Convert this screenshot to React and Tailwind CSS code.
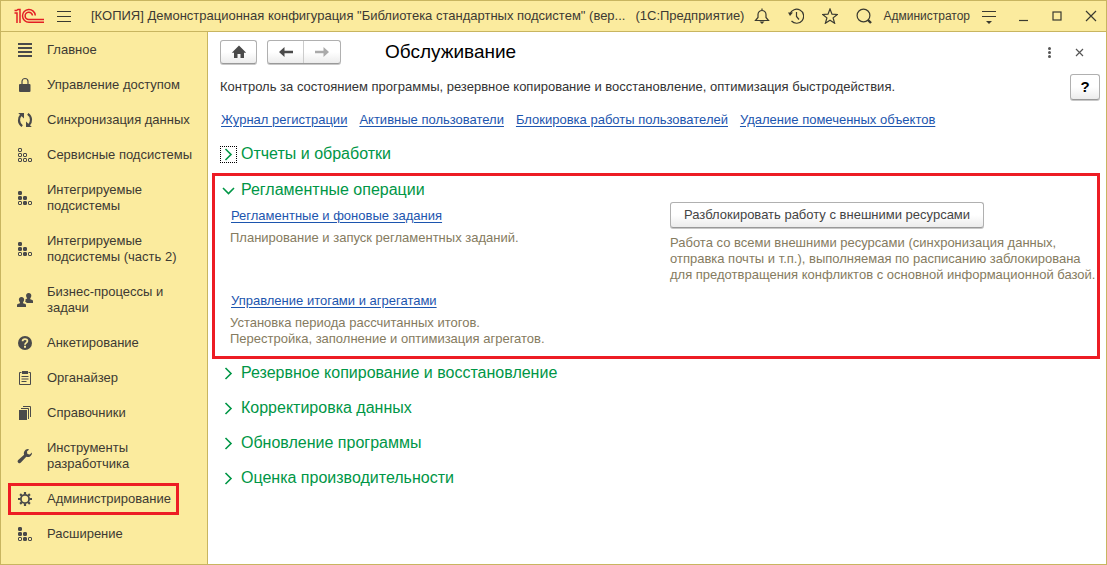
import React, { useState } from 'react'

const icons = {
    main: (
        <path d="M1 2h14M1 6h14M1 10h14M1 14h14" stroke="currentColor" strokeWidth={2} />
    ),
    lock: (
        <>
            <path d="M5 7V4.500a3 3 0 0 1 6 0V7" fill="none" stroke="currentColor" strokeWidth={1.2} />
            <rect x="2" y="7" width="11.500" height="8" rx="1" fill="currentColor" />
        </>
    ),
    sync: (
        <>
            <path d="M5.200 14.200C1.200 11.500 1 6 4.200 2.800M10.800 1.800C14.800 4.500 15 10 11.800 13.200" fill="none" stroke="currentColor" strokeWidth={2.200} />
            <path d="M1.200 1h5.800v5.500zM14.800 15H9V9.500z" fill="currentColor" />
        </>
    ),
    service: (
        <g fill="none" stroke="currentColor">
            <rect x="1.500" y="1.500" width="3" height="3" rx="0.500" />
            <rect x="1.500" y="6.500" width="3" height="3" rx="0.500" />
            <rect x="6.500" y="6.500" width="3" height="3" rx="0.500" />
            <rect x="1.500" y="11.500" width="3" height="3" rx="0.500" />
            <rect x="6.500" y="11.500" width="3" height="3" rx="0.500" />
            <rect x="11.500" y="11.500" width="3" height="3" rx="0.500" />
        </g>
    ),
    blocks: (
        <g fill="currentColor" stroke="currentColor">
            <rect x="1.500" y="1.500" width="3" height="3" rx="0.500" />
            <rect x="1.500" y="6.500" width="3" height="3" rx="0.500" />
            <rect x="6.500" y="6.500" width="3" height="3" rx="0.500" />
            <rect x="1.500" y="11.500" width="3" height="3" rx="0.500" fill="none" />
            <rect x="6.500" y="11.500" width="3" height="3" rx="0.500" />
            <rect x="11.500" y="11.500" width="3" height="3" rx="0.500" fill="none" />
        </g>
    ),
    people: (
        <g fill="currentColor">
            <path d="M11.700 1a2.600 2.600 0 0 1 2.500 3.400c-.2.800-.5 1.400-.9 1.700v1.100l2 .8c.5.200.7.600.7 1.100V11H9.800c-.2-.5-.6-.8-1-1l-.7-.3c.4-.7.600-1.500.4-2.500l1.600-.6v-.5c-.4-.3-.7-.9-.9-1.700A2.600 2.600 0 0 1 11.700 1z" />
            <path d="M4.500 5a2.600 2.600 0 0 1 2.500 3.400c-.2.800-.5 1.400-.9 1.700v1.100l2.200.8c.5.200.7.600.7 1.100V15H0v-1.900c0-.5.300-.9.700-1.100l2.200-.8v-1.100c-.4-.3-.7-.9-.9-1.700A2.600 2.600 0 0 1 4.500 5z" />
        </g>
    ),
    question: (
        <>
            <circle cx="8" cy="8" r="7" fill="currentColor" />
            <path d="M5.600 6.300C5.600 3.300 10.400 3.400 10.400 6.100 10.400 7.900 8 7.900 8 9.700" fill="none" stroke="#fbeb9e" strokeWidth={1.8} />
            <path d="M7 10.800h2v1.900H7z" fill="#fbeb9e" />
        </>
    ),
    organizer: (
        <g fill="none" stroke="currentColor">
            <path d="M4.500 2.500h-2v12h11v-12h-2" />
            <path d="M5 2.500h6" strokeWidth={3} />
            <path d="M4.500 6.500h7M4.500 9h7M4.500 11.500h5" />
        </g>
    ),
    books: (
        <>
            <rect x="2" y="5" width="8" height="10" fill="currentColor" />
            <path d="M4 3.500h7.500V14M6 1.500h7.500V12" fill="none" stroke="currentColor" />
        </>
    ),
    wrench: (
        <path
            d="M10.300 1.100a4.200 4.200 0 0 0-3.200 5.600L1.200 12a1.800 1.800 0 1 0 2.700 2.600l5.400-5.800a4.200 4.200 0 0 0 5.700-4.300l-2.300 2.100-2.300-.7-.5-2.300 2.300-2a4.600 4.600 0 0 0-1.900-.5z"
            fill="currentColor"
        />
    ),
    gear: (
        <g fill="none" stroke="currentColor">
            <circle cx="8" cy="8" r="4.100" strokeWidth={1.800} />
            <path d="M8 1v2.500M8 12.500V15M1 8h2.500M12.500 8H15M3.100 3.100l1.700 1.700M11.200 11.200l1.700 1.700M3.100 12.900l1.700-1.700M11.200 4.800l1.700-1.700" strokeWidth={2.2} />
        </g>
    ),
}

const menu = [
    { icon: 'main', label: 'Главное' },
    { icon: 'lock', label: 'Управление доступом' },
    { icon: 'sync', label: 'Синхронизация данных' },
    { icon: 'service', label: 'Сервисные подсистемы' },
    { icon: 'blocks', label: 'Интегрируемые подсистемы' },
    { icon: 'blocks', label: 'Интегрируемые подсистемы (часть 2)' },
    { icon: 'people', label: 'Бизнес-процессы и задачи' },
    { icon: 'question', label: 'Анкетирование' },
    { icon: 'organizer', label: 'Органайзер' },
    { icon: 'books', label: 'Справочники' },
    { icon: 'wrench', label: 'Инструменты разработчика' },
    { icon: 'gear', label: 'Администрирование', marked: true },
    { icon: 'blocks', label: 'Расширение' },
]

const links = ['Журнал регистрации', 'Активные пользователи', 'Блокировка работы пользователей', 'Удаление помеченных объектов']

const buttonStyle = 'border border-[#b0b0b0] border-b-[#999999] rounded-[3px] bg-linear-to-b from-white from-50% to-[#ececec] shadow-[0_1px_0_#c8c8c8]'

function Logo() {
    return (
        <svg className="w-[30px] h-4 shrink-0" viewBox="0 0 30 16" fill="none" stroke="#e31e24" strokeWidth={1.5} aria-label="1C" role="img">
            <path d="M0.500 5H3V15M0.500 2.500h2L4 1.500H6V15" />
            <path d="M21.300 7.500A6.400 6.400 0 1 0 15 14.300H30" />
            <path d="M18.500 7.500A3.700 3.700 0 1 0 15 11.600H30" />
        </svg>
    )
}

function HeaderButton({ label, children }) {
    return (
        <button type="button" aria-label={label} className="shrink-0 text-[#3a3a30]">
            <svg className="w-4 h-4" viewBox="0 0 16 16" fill="none" stroke="currentColor" strokeWidth={1.2}>
                {children}
            </svg>
        </button>
    )
}

function Header() {
    return (
        <header className="flex items-center h-[31px] shrink-0 pl-[13px] pr-[7px] border-b border-[#c8b560] bg-[#fbeb9e] text-[#3d3a33]">
            <Logo />
            <button type="button" aria-label="Меню" className="ml-[13px] shrink-0">
                <svg className="w-[14px] h-3" viewBox="0 0 14 12" stroke="#3a3a30">
                    <path d="M0 1.500h14M0 6.500h14M0 11.500h14" />
                </svg>
            </button>
            <div className="flex flex-1 min-w-0 ml-5 overflow-hidden whitespace-nowrap">
                <span>[КОПИЯ] Демонстрационная конфигурация "Библиотека стандартных подсистем" (вер...</span>
                <span className="ml-[10px]">(1С:Предприятие)</span>
            </div>
            <div className="flex items-center gap-[18px] shrink-0">
                <HeaderButton label="Уведомления">
                    <path d="M1.500 12.500h13L12 9.500V6.500a4 4 0 0 0-8 0v3zM8 .5v2" />
                    <path d="M5.500 13.500h5L8 16z" fill="currentColor" stroke="none" />
                </HeaderButton>
                <HeaderButton label="История">
                    <path d="M2 6A7 7 0 1 1 3.500 13M8.500 4v4.500L11 11.500" />
                    <path d="M0 4.500h5L2 8z" fill="currentColor" stroke="none" />
                </HeaderButton>
                <HeaderButton label="Избранное">
                    <path d="M8 1l2 5.200 5.300.3-4.200 3.400 1.500 5.300L8 12.200l-4.600 3 1.500-5.300L.7 6.500 6 6.200z" />
                </HeaderButton>
                <HeaderButton label="Поиск">
                    <circle cx="7.500" cy="7.500" r="6.400" />
                    <path d="M12 12l3 3" strokeWidth={2.4} />
                </HeaderButton>
            </div>
            <button type="button" className="mx-[11px] text-xs shrink-0">Администратор</button>
            <div className="flex items-center gap-[18px] shrink-0">
                <HeaderButton label="Настройки">
                    <path d="M1 3.500h14M1 8.500h14" />
                    <path d="M5 13h6l-3 3z" fill="currentColor" stroke="none" />
                </HeaderButton>
                <HeaderButton label="Свернуть">
                    <path d="M4 12.500h9" />
                </HeaderButton>
                <HeaderButton label="Развернуть">
                    <rect x="4" y="4" width="8" height="8" />
                </HeaderButton>
                <HeaderButton label="Закрыть">
                    <path d="M3 3l10 10M13 3L3 13" />
                </HeaderButton>
            </div>
        </header>
    )
}

function Sidebar() {
    return (
        <nav className="w-[207px] shrink-0 pt-px border-r border-[#c8b560] bg-[#fbeb9e]">
            {menu.map((item, index) => (
                <button key={index} type="button" className="relative flex items-center w-full pt-[9px] pb-[10px] pl-4 text-left text-[#3d3a33]">
                    <svg className="w-4 h-4 shrink-0 text-[#4a4a4a]" viewBox="0 0 16 16" aria-hidden="true">
                        {icons[item.icon]}
                    </svg>
                    <span className="ml-[14px] max-w-[152px]">{item.label}</span>
                    {item.marked && (
                        <span className="absolute top-px bottom-[2px] left-[7px] right-7 border-3 border-[#ed1c24]" />
                    )}
                </button>
            ))}
        </nav>
    )
}

function SectionTitle({ title, open, focused, onClick }) {
    return (
        <button type="button" aria-expanded={open} onClick={onClick} className="flex items-center gap-1 h-5 text-base text-[#009646]">
            <span className={focused ? 'p-px border border-dotted border-black' : 'p-[2px]'}>
                <svg className="w-[13px] h-[13px]" viewBox="0 0 13 13" fill="none" stroke="currentColor" strokeWidth={1.6} aria-hidden="true">
                    {open ? <path d="M1 4l5.500 5.500L12 4" /> : <path d="M3.500 1L9 6.500 3.500 12" />}
                </svg>
            </span>
            {title}
        </button>
    )
}

function Link({ children }) {
    return <a href="#" className="text-[#1c55ae] underline underline-offset-2">{children}</a>
}

export default function App() {
    const [open, setOpen] = useState(true);

    return (
        <div className="flex flex-col min-h-screen border border-[#c8b560] bg-white font-['Liberation_Sans',Arial,sans-serif] text-[13px] leading-4 text-[#333333]">
            <Header />
            <div className="flex flex-1">
                <Sidebar />
                <main className="flex-1 min-w-0 pl-1 pr-[6px] pt-2">
                    {/* Toolbar */}
                    <div className="flex items-center pl-2 pr-[14px]">
                        <button type="button" aria-label="Домой" className={`flex items-center justify-center w-[37px] h-6 ${buttonStyle}`}>
                            <svg className="w-4 h-4" viewBox="0 0 16 16" fill="#4a4a4a">
                                <path d="M8 1.500L.8 8.700H3V14h3.500v-4h3v4H13V8.700h2.200z" />
                            </svg>
                        </button>
                        <div className={`flex ml-[10px] h-6 ${buttonStyle}`}>
                            <button type="button" aria-label="Назад" className="flex items-center justify-center w-9 border-r border-[#cccccc]">
                                <svg className="w-4 h-4" viewBox="0 0 16 16" fill="#4a4a4a">
                                    <path d="M1 8l5.500-5v3.800H15v2.400H6.500V13z" />
                                </svg>
                            </button>
                            <button type="button" aria-label="Вперед" className="flex items-center justify-center w-9">
                                <svg className="w-4 h-4" viewBox="0 0 16 16" fill="#aaaaaa">
                                    <path d="M15 8L9.500 3v3.800H1v2.400h8.500V13z" />
                                </svg>
                            </button>
                        </div>
                        <h1 className="flex-1 ml-11 text-[19px] leading-6 text-black">Обслуживание</h1>
                        <button type="button" aria-label="Ещё" className="mr-[17px]">
                            <svg className="w-[13px] h-[13px]" viewBox="0 0 13 13" fill="#555555">
                                <circle cx="6.500" cy="2.500" r="1.500" />
                                <circle cx="6.500" cy="6.500" r="1.500" />
                                <circle cx="6.500" cy="10.500" r="1.500" />
                            </svg>
                        </button>
                        <button type="button" aria-label="Закрыть форму">
                            <svg className="w-[13px] h-[13px]" viewBox="0 0 13 13" stroke="#555555" strokeWidth={1.2}>
                                <path d="M3 3l7 7M10 3l-7 7" />
                            </svg>
                        </button>
                    </div>

                    <div className="flex justify-between items-center mt-[10px] pl-2">
                        <p>Контроль за состоянием программы, резервное копирование и восстановление, оптимизация быстродействия.</p>
                        <button type="button" className={`w-[30px] h-[26px] text-[15px] font-bold text-black ${buttonStyle}`}>?</button>
                    </div>

                    <div className="flex gap-3 mt-3 pl-[9px]">
                        {links.map(link => <Link key={link}>{link}</Link>)}
                    </div>

                    <div className="mt-4 pl-2">
                        <SectionTitle title="Отчеты и обработки" open={false} focused />
                    </div>

                    {/* Highlighted group */}
                    <section className="mt-[9px] pt-1 pb-[9px] pl-[5px] pr-2 border-3 border-[#ed1c24]">
                        <SectionTitle title="Регламентные операции" open={open} onClick={() => setOpen(!open)} />
                        {open && (
                            <div className="grid grid-cols-2 gap-x-[21px] pl-[10px]">
                                <div className="pt-2">
                                    <div className="pl-px"><Link>Регламентные и фоновые задания</Link></div>
                                    <p className="mt-[6px] text-[#857b60]">Планирование и запуск регламентных заданий.</p>
                                </div>
                                <div className="pt-[2px]">
                                    <button type="button" className={`h-[26px] px-[13px] text-[#444444] ${buttonStyle}`}>Разблокировать работу с внешними ресурсами</button>
                                    <p className="mt-[7px] whitespace-nowrap text-[#857b60]">
                                        Работа со всеми внешними ресурсами (синхронизация данных,<br />
                                        отправка почты и т.п.), выполняемая по расписанию заблокирована<br />
                                        для предотвращения конфликтов с основной информационной базой.
                                    </p>
                                </div>
                                <div className="pt-[10px]">
                                    <div className="pl-px"><Link>Управление итогами и агрегатами</Link></div>
                                    <p className="mt-[6px] text-[#857b60]">
                                        Установка периода рассчитанных итогов.<br />
                                        Перестройка, заполнение и оптимизация агрегатов.
                                    </p>
                                </div>
                            </div>
                        )}
                    </section>

                    <div className="flex flex-col items-start gap-[15px] mt-1 pl-2">
                        <SectionTitle title="Резервное копирование и восстановление" open={false} />
                        <SectionTitle title="Корректировка данных" open={false} />
                        <SectionTitle title="Обновление программы" open={false} />
                        <SectionTitle title="Оценка производительности" open={false} />
                    </div>
                </main>
            </div>
        </div>
    )
}
